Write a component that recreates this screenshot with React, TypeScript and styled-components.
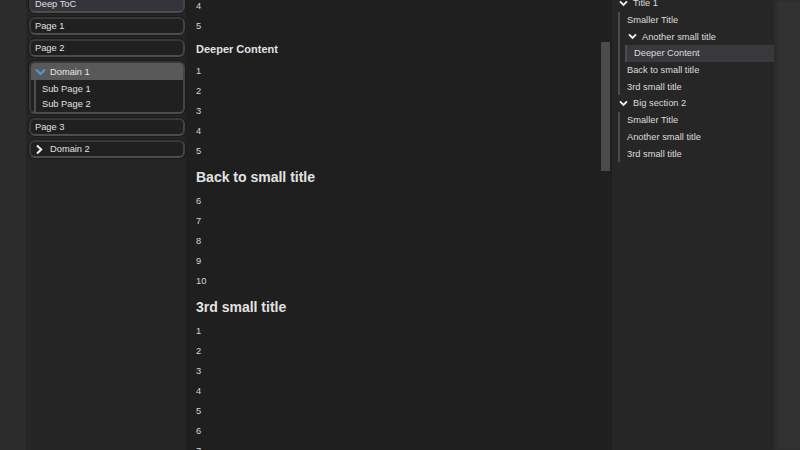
import styled, { createGlobalStyle } from "styled-components";

const GlobalStyle = createGlobalStyle`
  html, body {
    margin: 0;
    padding: 0;
    background: #2f2f2f;
    font-family: "Liberation Sans", Arial, sans-serif;
    font-size: 9.3px;
    color: #d6d6d6;
    overflow: hidden;
  }
`;

const numbersA = ["4", "5"];
const numbersB = ["1", "2", "3", "4", "5"];
const numbersC = ["6", "7", "8", "9", "10"];
const numbersD = ["1", "2", "3", "4", "5", "6", "7"];

export default function App() {
  return (
    <>
      <GlobalStyle />
      <Layout>
        <Gutter />
        <Sidebar>
          <NavList>
            <NavItem $active>Deep ToC</NavItem>
            <NavItem>Page 1</NavItem>
            <NavItem>Page 2</NavItem>
            <NavGroup>
              <GroupHeader>
                <svg viewBox="0 0 11 8" width="11" height="8">
                  <path d="M1 1.5 L5.5 6 L10 1.5" fill="none" stroke="#4f9bd6" strokeWidth="2" />
                </svg>
                Domain 1
              </GroupHeader>
              <SubList>
                <SubItem>Sub Page 1</SubItem>
                <SubItem>Sub Page 2</SubItem>
              </SubList>
            </NavGroup>
            <NavItem>Page 3</NavItem>
            <NavItem $gap={7}>
              <svg viewBox="0 0 8 11" width="8" height="11">
                <path d="M2 1.5 L6.2 5.5 L2 9.5" fill="none" stroke="#f2f2f2" strokeWidth="2" />
              </svg>
              Domain 2
            </NavItem>
          </NavList>
        </Sidebar>

        <Main>
          <Content>
            {numbersA.map((n, i) => (
              <Para key={"a" + i}>{n}</Para>
            ))}
            <SubHeading>Deeper Content</SubHeading>
            {numbersB.map((n, i) => (
              <Para key={"b" + i}>{n}</Para>
            ))}
            <Heading>Back to small title</Heading>
            {numbersC.map((n, i) => (
              <Para key={"c" + i}>{n}</Para>
            ))}
            <Heading>3rd small title</Heading>
            {numbersD.map((n, i) => (
              <Para key={"d" + i}>{n}</Para>
            ))}
          </Content>
          <ScrollThumb />
        </Main>

        <Toc>
          <TocList>
            <TocRow>
              <Chevron />
              Title 1
            </TocRow>
            <TocChildren>
              <TocRow>Smaller Title</TocRow>
              <TocRow $indent={1}>
                <Chevron />
                Another small title
              </TocRow>
              <TocNested>
                <TocRow $current>Deeper Content</TocRow>
              </TocNested>
              <TocRow>Back to small title</TocRow>
              <TocRow>3rd small title</TocRow>
            </TocChildren>
            <TocRow>
              <Chevron />
              Big section 2
            </TocRow>
            <TocChildren>
              <TocRow>Smaller Title</TocRow>
              <TocRow>Another small title</TocRow>
              <TocRow>3rd small title</TocRow>
            </TocChildren>
          </TocList>
        </Toc>
        <Gutter $right />
      </Layout>
    </>
  );
}

function Chevron() {
  return (
    <ChevronIcon viewBox="0 0 9 7" width="9" height="7">
      <path d="M1 1.3 L4.5 4.8 L8 1.3" fill="none" stroke="#f0f0f0" strokeWidth="1.9" />
    </ChevronIcon>
  );
}

const Layout = styled.div`
  display: grid;
  grid-template-columns: 26px 160px 426px 162px 26px;
  height: 450px;
  overflow: hidden;
`;

const Gutter = styled.div<{ $right?: boolean }>`
  background: ${(p) => (p.$right ? "#323232" : "#2c2c2c")};
  box-shadow: ${(p) => (p.$right ? "inset 2px 0 3px #2a2a2a" : "none")};
`;

const Sidebar = styled.nav`
  background: #252525;
  overflow: hidden;
`;

const NavList = styled.div`
  display: flex;
  flex-direction: column;
  gap: 4px;
  margin-top: -5px;
  padding: 0 1px 0 3px;
`;

const boxed = `
  box-sizing: border-box;
  border: 2px solid #383838;
  border-bottom-color: #4c4c4c;
  border-right-color: #444444;
  border-radius: 6px;
  box-shadow: 0 0 0 1px #1b1b1b;
  background: #202020;
`;

const NavItem = styled.div<{ $active?: boolean; $gap?: number }>`
  ${boxed}
  display: flex;
  align-items: center;
  gap: ${(p) => p.$gap ?? 6}px;
  height: 18px;
  padding: 0 6px 0 4px;
  background: ${(p) => (p.$active ? "#35343d" : "#202020")};
  color: #e0e0e0;

  svg {
    flex: none;
  }
`;

const NavGroup = styled.div`
  ${boxed}
  overflow: hidden;
`;

const GroupHeader = styled.div`
  display: flex;
  align-items: center;
  gap: 4px;
  height: 17px;
  padding: 0 6px 0 4px;
  background: #595959;
  color: #e8e8e8;

  svg {
    flex: none;
  }
`;

const SubList = styled.div`
  margin-left: 3px;
  border-left: 2px solid #4e4e4e;
  padding: 2px 0 0 6px;
`;

const SubItem = styled.div`
  height: 15px;
  line-height: 15px;
  color: #e0e0e0;
`;

const Main = styled.main`
  position: relative;
  background: #1f1f1f;
  overflow: hidden;
`;

const Content = styled.article`
  margin-top: -4px;
  padding-left: 10px;
`;

const Para = styled.p`
  margin: 0;
  height: 20px;
  line-height: 20px;
  color: #d6d6d6;
`;

const SubHeading = styled.h4`
  box-sizing: border-box;
  margin: 0;
  height: 25px;
  padding-top: 2px;
  line-height: 23px;
  font-size: 11px;
  font-weight: bold;
  color: #e2e2e2;
`;

const Heading = styled.h3`
  box-sizing: border-box;
  margin: 0;
  height: 30px;
  padding-top: 3px;
  line-height: 27px;
  font-size: 14px;
  font-weight: bold;
  color: #e2e2e2;
`;

const ScrollThumb = styled.div`
  position: absolute;
  right: 2px;
  top: 42px;
  width: 9px;
  height: 129px;
  background: #4b4b4b;
`;

const Toc = styled.aside`
  background: #262626;
  overflow: hidden;
`;

const TocList = styled.div`
  margin-top: -5px;
`;

const TocRow = styled.div<{ $indent?: number; $current?: boolean }>`
  display: flex;
  align-items: center;
  gap: 5px;
  height: 16.7px;
  padding-left: ${(p) => 7 + (p.$indent ?? 0)}px;
  background: ${(p) => (p.$current ? "#38383d" : "transparent")};
  color: #dcdcdc;
  white-space: nowrap;
`;

const TocChildren = styled.div`
  margin-left: 6px;
  border-left: 2px solid #4c4c4c;
`;

const TocNested = styled.div`
  margin-left: 5px;
  border-left: 2px solid #4c4c4c;
`;

const ChevronIcon = styled.svg`
  flex: none;
`;
